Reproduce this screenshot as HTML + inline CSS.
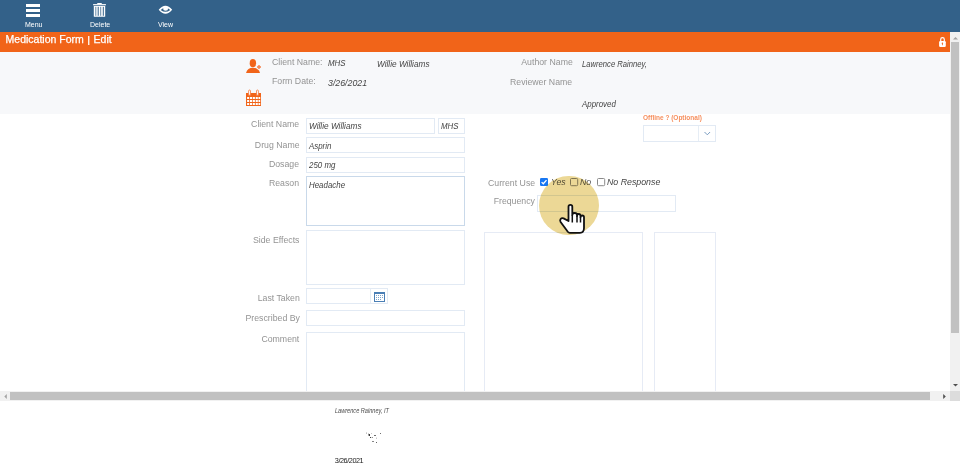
<!DOCTYPE html>
<html><head><meta charset="utf-8">
<style>
html,body{margin:0;padding:0;width:960px;height:469px;overflow:hidden;background:#fff;font-family:"Liberation Sans",sans-serif;}
.a{position:absolute;white-space:nowrap;}
#tb{position:absolute;left:0;top:0;width:960px;height:32px;background:#336189;}
.tbl{position:absolute;top:21px;font-size:7px;line-height:8px;color:#fff;}
#ob{position:absolute;left:0;top:32px;width:950px;height:20px;background:#f16419;}
#band{position:absolute;left:0;top:52px;width:950px;height:62px;background:#f7f8fa;}
.lbl{position:absolute;white-space:nowrap;font-size:9.3px;line-height:10px;color:#939393;text-align:right;transform:scaleX(0.94);transform-origin:100% 0;}
.val{position:absolute;white-space:nowrap;font-style:italic;font-size:8.5px;line-height:10px;color:#444;transform:scaleX(0.93);transform-origin:0 0;}
.inp{position:absolute;box-sizing:border-box;border:1px solid #e2eaf4;background:#fff;}
</style></head>
<body>
<div id="root" style="position:absolute;left:0;top:0;width:960px;height:469px;will-change:transform">
<!-- toolbar -->
<div id="tb">
  <svg class="a" style="left:26px;top:4px" width="14" height="13"><rect x="0" y="0" width="14" height="3" fill="#fff"/><rect x="0" y="5" width="14" height="3" fill="#fff"/><rect x="0" y="10" width="14" height="3" fill="#fff"/></svg>
  <div class="tbl" style="left:25px">Menu</div>
  <svg class="a" style="left:90px;top:1px" width="20" height="18"><path d="M6.9 3.1 Q7.2 2.1 8 2.1 H11 Q11.8 2.1 12.1 3.1Z" fill="#fff"/><rect x="3.1" y="3.1" width="12.8" height="1.2" fill="#fff"/><path d="M3.8 5 H15.2 V15.3 Q15.2 15.8 14.6 15.8 H4.4 Q3.8 15.8 3.8 15.3Z" fill="#fff"/><g fill="#336189"><rect x="5.3" y="5.8" width="1" height="9" opacity=".75"/><rect x="7.7" y="5.8" width="1" height="9"/><rect x="10.2" y="5.8" width="1" height="9" opacity=".75"/><rect x="12.8" y="5.8" width="1" height="9"/></g></svg>
  <div class="tbl" style="left:90px">Delete</div>
  <svg class="a" style="left:158px;top:4px" width="15" height="11"><path d="M0.7 5.7 Q7.45 -2.4 14.2 5.7 Q7.45 13.8 0.7 5.7Z M2.6 5.9 Q7.45 9.8 12.3 5.9 Q7.45 1.8 2.6 5.9Z" fill="#fff" fill-rule="evenodd"/><ellipse cx="7.6" cy="4.8" rx="2.5" ry="1.9" fill="#fff"/></svg>
  <div class="tbl" style="left:158px">View</div>
</div>
<div id="clip" style="position:absolute;left:0;top:0;width:950px;height:391px;overflow:hidden">
<!-- orange bar -->
<div id="ob">
  <div class="a" style="left:5.6px;top:1.3px;font-size:10.5px;line-height:12px;color:#fff;-webkit-text-stroke:0.25px #fff">Medication Form</div><div class="a" style="left:88px;top:4.3px;width:1px;height:8.3px;background:#fdeee5;box-shadow:1px 0 0 rgba(255,235,220,0.45)"></div><div class="a" style="left:93.6px;top:1.3px;font-size:10.5px;line-height:12px;color:#fff;-webkit-text-stroke:0.25px #fff">Edit</div>
  <svg class="a" style="left:938px;top:4px" width="9" height="12"><path d="M2.7 5.5 V3.5 A1.8 1.8 0 0 1 6.3 3.5 V5.5" fill="none" stroke="#fff" stroke-width="1.2"/><rect x="1.1" y="5" width="6.7" height="6" rx="1.2" fill="#fff"/><circle cx="4.4" cy="7.3" r="0.7" fill="#f16419"/><path d="M3.9 7.5 H4.9 L4.7 9.3 H4.1Z" fill="#f16419"/></svg>
</div>
<!-- gray band -->
<div id="band">
  <svg class="a" style="left:246px;top:7px" width="17" height="15"><ellipse cx="6.9" cy="4.2" rx="3.2" ry="4.1" fill="#f16419"/><path d="M0 13.9 C0.8 10.5 3.5 8.7 7 8.7 C10.5 8.7 13.2 10.5 14 13.9Z" fill="#f16419"/><path d="M10.6 8h4.8M13 5.6v4.8" stroke="#f7f8fa" stroke-width="3"/><path d="M11 8h4M13 6v4" stroke="#f4804a" stroke-width="1.4"/></svg>
  <svg class="a" style="left:246px;top:37px" width="16" height="17"><rect x="0" y="4" width="15" height="13" fill="#f16419"/><g fill="#fff"><rect x="1.1" y="8" width="2.1" height="2"/><rect x="4" y="8" width="2.1" height="2"/><rect x="6.8" y="8" width="2.1" height="2"/><rect x="9.7" y="8" width="2.1" height="2"/><rect x="12.5" y="8" width="1.7" height="2"/><rect x="1.1" y="11" width="2.1" height="2"/><rect x="4" y="11" width="2.1" height="2"/><rect x="6.8" y="11" width="2.1" height="2"/><rect x="9.7" y="11" width="2.1" height="2"/><rect x="12.5" y="11" width="1.7" height="2"/><rect x="1.1" y="14" width="2.1" height="2"/><rect x="4" y="14" width="2.1" height="2"/><rect x="6.8" y="14" width="2.1" height="2"/><rect x="9.7" y="14" width="2.1" height="2"/><rect x="12.5" y="14" width="1.7" height="2"/></g><path d="M2.6 6.2 V2 Q2.6 1 3.55 1 Q4.5 1 4.5 2 V6.2Z M10.5 6.2 V2 Q10.5 1 11.45 1 Q12.4 1 12.4 2 V6.2Z" fill="#fff" stroke="#f47a40" stroke-width="0.8"/></svg>
  <div class="lbl" style="left:271.6px;top:4.5px;transform-origin:0 0">Client Name:</div>
  <div class="val" style="left:328px;top:6px">MHS</div>
  <div class="val" style="left:377px;top:6.5px;transform:scaleX(0.97)">Willie Williams</div>
  <div class="lbl" style="left:271.6px;top:23.5px;transform-origin:0 0">Form Date:</div>
  <div class="val" style="left:328px;top:26px;font-size:8.8px;transform:none">3/26/2021</div>
  <div class="lbl" style="right:377.6px;top:4.5px">Author Name</div>
  <div class="val" style="left:582px;top:6.5px;transform:scaleX(0.9)">Lawrence Rainney,</div>
  <div class="lbl" style="right:377.6px;top:25px">Reviewer Name</div>
  <div class="val" style="left:582px;top:47px">Approved</div>
</div>
<!-- form -->
<div class="lbl" style="right:650.5px;top:118.5px">Client Name</div>
<div class="inp" style="left:306px;top:118px;width:129px;height:16px"></div>
<div class="val" style="left:309px;top:121.3px;transform:scaleX(0.97)">Willie Williams</div>
<div class="inp" style="left:438px;top:118px;width:27px;height:16px"></div>
<div class="val" style="left:441px;top:121px">MHS</div>
<div class="lbl" style="right:650.5px;top:139.5px">Drug Name</div>
<div class="inp" style="left:306px;top:137px;width:159px;height:16px"></div>
<div class="val" style="left:309px;top:140.8px">Asprin</div>
<div class="lbl" style="right:650.5px;top:158.5px">Dosage</div>
<div class="inp" style="left:306px;top:157px;width:159px;height:16px"></div>
<div class="val" style="left:309px;top:160px">250 mg</div>
<div class="lbl" style="right:650.5px;top:178.2px">Reason</div>
<div class="inp" style="left:306px;top:176px;width:159px;height:50px;border-color:#c9d9ea"></div>
<div class="val" style="left:309px;top:180px">Headache</div>
<div class="lbl" style="right:650.5px;top:234.5px">Side Effects</div>
<div class="inp" style="left:306px;top:230px;width:159px;height:55px"></div>
<div class="lbl" style="right:650.5px;top:292.5px">Last Taken</div>
<div class="inp" style="left:306px;top:288px;width:82px;height:16px"></div>
<div class="a" style="left:370px;top:289px;width:1px;height:14px;background:#e6edf5"></div>
<svg class="a" style="left:374px;top:292px" width="11" height="10"><rect x="0.5" y="0.5" width="10" height="9" fill="#fff" stroke="#4a7fb5"/><rect x="0" y="0" width="11" height="2" fill="#4a7fb5"/><g fill="#7ea4cb"><rect x="2" y="3" width="1" height="1"/><rect x="4" y="3" width="1" height="1"/><rect x="6" y="3" width="1" height="1"/><rect x="8" y="3" width="1" height="1"/><rect x="2" y="5" width="1" height="1"/><rect x="4" y="5" width="1" height="1"/><rect x="6" y="5" width="1" height="1"/><rect x="8" y="5" width="1" height="1"/><rect x="2" y="7" width="1" height="1"/><rect x="4" y="7" width="1" height="1"/><rect x="6" y="7" width="1" height="1"/></g></svg>
<div class="lbl" style="right:650.5px;top:312.5px">Prescribed By</div>
<div class="inp" style="left:306px;top:310px;width:159px;height:16px"></div>
<div class="lbl" style="right:650.5px;top:333.5px">Comment</div>
<div class="inp" style="left:306px;top:332px;width:159px;height:80px"></div>
<!-- right column -->
<div class="a" style="left:643px;top:114px;font-size:6.5px;line-height:8px;font-weight:bold;color:#f68f5e">Offline ? (Optional)</div>
<div class="inp" style="left:643px;top:125px;width:73px;height:17px"></div>
<div class="a" style="left:698px;top:126px;width:1px;height:15px;background:#e6edf5"></div>
<svg class="a" style="left:704px;top:131px" width="7" height="5"><path d="M0.5 1 L3.3 3.8 L6.1 1" fill="none" stroke="#7a9cc0" stroke-width="1"/></svg>
<div class="lbl" style="right:414.5px;top:178.3px">Current Use</div>
<div class="lbl" style="right:415px;top:196px">Frequency</div>
<div class="inp" style="left:537px;top:195px;width:139px;height:17px"></div>
<div class="inp" style="left:484px;top:232px;width:159px;height:180px;border-color:#e6ebf5"></div>
<div class="inp" style="left:654px;top:232px;width:62px;height:180px;border-color:#e6ebf5"></div>
<!-- checkboxes -->
<svg class="a" style="left:540px;top:178px" width="9" height="9"><rect x="0" y="0" width="8" height="8" rx="1.3" fill="#1877f2"/><path d="M1.6 4.1 L3.3 5.8 L6.5 2.1" fill="none" stroke="#fff" stroke-width="1.3"/></svg>
<div class="a" style="left:551px;top:176.7px;font-size:8.8px;line-height:10px;font-style:italic;color:#555">Yes</div>
<svg class="a" style="left:570px;top:178px" width="9" height="9"><rect x="0.5" y="0.5" width="7.2" height="7.2" rx="1" fill="#fff" stroke="#8a8a8a" stroke-width="1"/></svg>
<div class="a" style="left:580px;top:176.7px;font-size:8.8px;line-height:10px;font-style:italic;color:#555">No</div>
<svg class="a" style="left:597px;top:178px" width="9" height="9"><rect x="0.5" y="0.5" width="7.2" height="7.2" rx="1" fill="#fff" stroke="#8a8a8a" stroke-width="1"/></svg>
<div class="a" style="left:607px;top:176.7px;font-size:8.8px;line-height:10px;font-style:italic;color:#444">No Response</div>
<!-- click highlight -->
<div class="a" style="left:538.9px;top:175.5px;width:59.8px;height:59.8px;border-radius:50%;background:rgb(236,216,150);mix-blend-mode:multiply"></div>
<svg class="a" style="left:558px;top:202px" width="29" height="34" viewBox="0 0 29 34"><path d="M10.5 19 V4.7 Q10.5 2.8 12.4 2.8 Q14.3 2.8 14.3 4.7 V13 Q14.3 11 16.65 11 Q19 11 19 13 V14 Q19 12 20.75 12 Q22.5 12 22.5 14 V15.3 Q22.5 13.5 24.25 13.5 Q26 13.5 26 15.3 V26 Q26 30.8 22 30.8 H11.8 Q10.6 30.8 9.8 29.8 L2.6 20 Q1.6 18.2 2.6 17 Q3.8 15.6 5.6 16.4 Z" fill="#fff" stroke="#111" stroke-width="1.8" stroke-linejoin="round"/><path d="M14.3 13 V20.5 M19 14 V20.5 M22.5 15.3 V20.5" stroke="#111" stroke-width="1.5"/></svg>
</div>
<!-- scrollbars -->
<div class="a" style="left:950px;top:32px;width:10px;height:359px;background:#f1f1f1"></div>
<div class="a" style="left:951px;top:42px;width:8px;height:291px;background:#c1c1c1"></div>
<div class="a" style="left:0;top:391px;width:950px;height:10px;background:#f1f1f1"></div>
<div class="a" style="left:10px;top:392px;width:920px;height:8px;background:#c1c1c1"></div>
<div class="a" style="left:950px;top:391px;width:10px;height:10px;background:#dcdcdc"></div>
<svg class="a" style="left:952.5px;top:36.5px" width="5" height="3"><path d="M0 2.5 L2.5 0 L5 2.5z" fill="#a3a3a3"/></svg>
<svg class="a" style="left:952.5px;top:384px" width="5" height="3"><path d="M0 0 L2.5 2.5 L5 0z" fill="#505050"/></svg>
<svg class="a" style="left:4px;top:393.5px" width="3" height="5"><path d="M2.8 0 L0.3 2.5 L2.8 5z" fill="#a3a3a3"/></svg>
<svg class="a" style="left:943.3px;top:393.8px" width="3" height="5"><path d="M0.2 0 L2.8 2.5 L0.2 5z" fill="#505050"/></svg>
<!-- bottom signature -->
<div class="a" style="left:335px;top:406.6px;font-size:6.4px;line-height:7px;font-style:italic;color:#4a4a4a;transform:scaleX(0.875);transform-origin:0 0">Lawrence Rainney, IT</div>
<svg class="a" style="left:360px;top:428px" width="24" height="18"><g fill="#222"><rect x="6" y="4.6" width="1" height="1" opacity=".45"/><rect x="8.6" y="6" width="1.4" height="2" opacity=".9"/><rect x="8" y="5.5" width="1" height="1" opacity=".4"/><rect x="10" y="9" width="1.2" height="1" opacity=".85"/><rect x="12" y="9" width="1" height="1" opacity=".5"/><rect x="14" y="7" width="2" height="1" opacity=".65"/><rect x="20" y="5" width="1" height="1" opacity=".65"/><rect x="16" y="9.5" width="1" height="1.5" opacity=".25"/><rect x="12" y="13" width="2" height="1" opacity=".55"/><rect x="16" y="14" width="1" height="1" opacity=".7"/><rect x="11" y="5" width="1" height="1" opacity=".25"/></g></svg>
<div class="a" style="left:334.8px;top:457px;font-size:7.3px;line-height:8px;color:#222;letter-spacing:-0.45px">3/26/2021</div>
</div>
</body></html>
